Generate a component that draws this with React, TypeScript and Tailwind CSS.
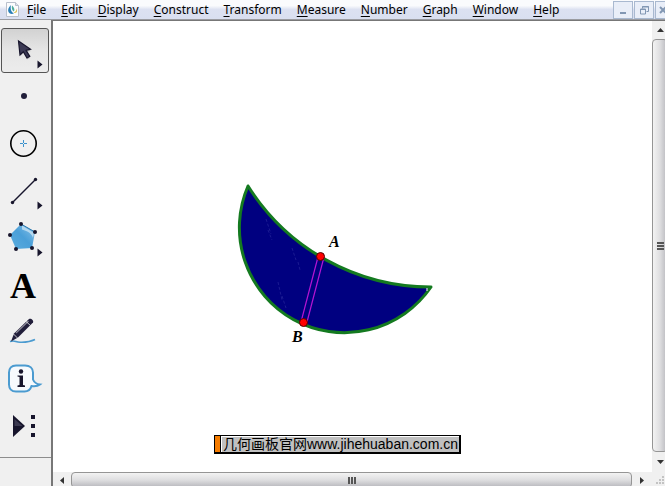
import React, { useState } from 'react';

interface ToolProps {
  label: string;
  active: boolean;
  onSelect: () => void;
  hasMenu?: boolean;
  children: React.ReactNode;
}

const MENUS = [
  'File',
  'Edit',
  'Display',
  'Construct',
  'Transform',
  'Measure',
  'Number',
  'Graph',
  'Window',
  'Help',
];

const AppIcon = () => (
  <svg width="13" height="15" viewBox="0 0 13 15" className="shrink-0">
    <path d="M.5.5h9l3 3v11H.5z" fill="#fbfcfe" stroke="#b9c0cc" />
    <path d="M9.5.5v3h3" fill="#dde2ea" stroke="#b9c0cc" />
    <path d="M5 3C2.500 5.500 1.500 7.500 2.500 10 3.500 12 6 12.500 8 11.500 5.500 10.500 4 7 5 3z" fill="#2b7fb8" />
    <path d="M6 3.500c-.5 2.500 0 4.500 1.500 6C9 8.500 8.500 5.500 6 3.500z" fill="#4fae9c" />
    <path d="M10.500 6.500c0 2-.8 3.500-3 4.300 1.300.5 3 0 3.500-1.300.3-1 .1-2-.5-3z" fill="#d9c35a" />
  </svg>
);

const ToolButton: React.FC<ToolProps> = ({ label, active, onSelect, hasMenu, children }) => (
  <button
    type="button"
    aria-label={label}
    aria-pressed={active}
    onClick={onSelect}
    className={`h-[45px] w-full rounded-[3px] border ${
      active
        ? 'border-[#555] bg-linear-to-b from-[#d2d2d2] via-[#e6e6e6] to-[#ececec]'
        : 'border-transparent'
    }`}
  >
    <svg width="46" height="43" viewBox="0 0 46 43" className="block">
      {children}
      {hasMenu && <path d="M35.500 31.500l5 4-5 4z" fill="#17152c" />}
    </svg>
  </button>
);

const TOOLS = [
  {
    label: 'Selection Arrow',
    hasMenu: true,
    icon: (
      <>
        <path d="M17 13l1.500 14 3-3 3.500 6.500 3-1.500-3.500-6 4.500-1z" fill="#999" opacity=".5" />
        <path
          d="M16.500 12l1.500 14 3.300-3.200 3.700 6.200 2.800-1.600-3.700-6.100 4.400-1.100z"
          fill="#3b3954"
          stroke="#17152c"
          strokeWidth="1.200"
        />
      </>
    ),
  },
  { label: 'Point', icon: <circle cx="22" cy="20" r="3" fill="#211e3a" /> },
  {
    label: 'Compass',
    icon: (
      <>
        <circle cx="21.500" cy="20.500" r="12.700" fill="none" stroke="#000" strokeWidth="1.600" />
        <path d="M18 20.500h3m1 0h3M21.500 17v3m0 1v3" stroke="#3b92cc" />
      </>
    ),
  },
  {
    label: 'Straightedge',
    hasMenu: true,
    icon: (
      <>
        <path d="M10.500 32.500l23-23" stroke="#17152c" strokeWidth="1.400" />
        <circle cx="10.500" cy="32.500" r="1.700" fill="#17152c" />
        <circle cx="33.500" cy="9.500" r="1.700" fill="#17152c" />
      </>
    ),
  },
  {
    label: 'Polygon',
    hasMenu: true,
    icon: (
      <>
        <path d="M19 7l14 8-3 16-16 1L8 18z" fill="url(#polygonFill)" />
        <path d="M20 8.500l12 7.500-1 5c-1-4-5-7-11-8.500z" fill="#d4e9f7" opacity=".7" />
        <path d="M19 7l14 8" stroke="#2876ad" />
        {[
          [19, 7],
          [33, 15],
          [30, 31],
          [14, 32],
          [8, 18],
        ].map(([x, y]) => (
          <circle key={x} cx={x} cy={y} r="2" fill="#17152c" />
        ))}
      </>
    ),
  },
  { label: 'Text', icon: null },
  {
    label: 'Marker',
    icon: (
      <>
        <path d="M8 30.500c5-1.500 5 .5 10 .7s10-.2 15-2.700" fill="none" stroke="#4b9bd0" strokeWidth="1.600" />
        <path d="M9 30.500l3-8L27 8c2-1 5 1.500 4 3.500L16 26.500z" fill="#211e3a" />
        <path d="M14 22L26.500 10" stroke="#8a8896" strokeWidth="1.200" />
        <path d="M11.500 23l4 4M24 10.500l4.500 4" stroke="#efefef" strokeWidth=".8" />
      </>
    ),
  },
  {
    label: 'Information',
    icon: (
      <>
        <path
          d="M14 7.500h9c5 0 8 3 8 7v7c1 2.500 3 4.500 7 5-2 1.500-5 2-8.500 1.500-1 3.500-3 5.500-7 5.500H14c-4.500 0-7-3-7-7v-12c0-4 2.500-7 7-7z"
          fill="#f7fafd"
          stroke="#4b9bd0"
          strokeWidth="2"
        />
        <circle cx="19" cy="13.500" r="2.200" fill="#17152c" />
        <path d="M15.500 17.500H21v9.500l2 .5v1.500h-7.500v-1.500l2-.5v-8l-2-.5z" fill="#17152c" />
      </>
    ),
  },
  {
    label: 'Custom Tools',
    icon: (
      <>
        <path d="M11 10l12 11-12 11z" fill="#17152c" />
        <path d="M12.500 14l8 7h-8z" fill="#55536a" opacity=".6" />
        <path d="M29 10h4v4h-4zM29 19h4v4h-4zM29 28h4v4h-4z" fill="#17152c" />
      </>
    ),
  },
];

const Sketch = () => (
  <>
    <svg
      width="220"
      height="180"
      viewBox="225 170 220 180"
      className="absolute top-[149px] left-[172px]"
    >
      <path
        d="M248 186A216 216 0 0 0 431 287A105 105 0 0 1 248 186z"
        fill="#000080"
        stroke="#147a20"
        strokeWidth="3"
        strokeLinejoin="round"
      />
      <path d="M426 289l2 0M427 291v-1" stroke="#fff" />
      <path
        d="M266 219l5 15M268 230l4 10M292 248l4 12M298 262l2 8M278 282l4 18M282 296l4 12"
        stroke="#26269a"
        strokeWidth=".7"
        strokeDasharray="3 2"
      />
      <path d="M318 257L301 322M324 257L307 322" stroke="#b414d2" strokeWidth="1.200" />
      <circle cx="320.500" cy="256.500" r="4" fill="#f00" stroke="#500" />
      <circle cx="303.500" cy="322.500" r="4" fill="#f00" stroke="#500" />
    </svg>
    <span className="absolute top-[211px] left-[276px] font-['Liberation_Serif',serif] text-base leading-5 font-bold italic">
      A
    </span>
    <span className="absolute top-[306px] left-[239px] font-['Liberation_Serif',serif] text-base leading-5 font-bold italic">
      B
    </span>
    <a
      href="#site"
      className="absolute top-[414px] left-[161px] flex h-[19px] border border-r-2 border-b-2 border-black bg-[#c0c0c0] whitespace-nowrap"
    >
      <span className="w-1.5 border-r border-black bg-[#f57c00]" />
      <span className="border-t border-l border-white pr-px pl-px font-['Liberation_Sans','Noto_Sans_CJK_SC',sans-serif] text-sm leading-[14px]">
        几何画板官网www.jihehuaban.com.cn
      </span>
    </a>
  </>
);

const VerticalScrollbar = () => (
  <div className="flex w-[13px] shrink-0 flex-col overflow-hidden bg-[#f0f0f0]">
    <button type="button" aria-label="Scroll up" className="flex h-[18px] w-4 shrink-0 items-center justify-center">
      <svg width="7" height="4" viewBox="0 0 7 4">
        <path d="M0 4l3.500-4L7 4z" fill="#333" />
      </svg>
    </button>
    <div className="flex w-4 flex-1 flex-col items-center justify-center gap-px rounded-sm border border-[#959595] bg-linear-to-r from-[#f3f3f3] via-[#dedee0] to-[#b8b8bd]">
      <span className="h-0.5 w-[7px] bg-[#555]" />
      <span className="h-0.5 w-[7px] bg-[#555]" />
      <span className="h-0.5 w-[7px] bg-[#555]" />
    </div>
    <button type="button" aria-label="Scroll down" className="flex h-5 w-4 shrink-0 items-center justify-center">
      <svg width="7" height="4" viewBox="0 0 7 4">
        <path d="M0 0l3.500 4L7 0z" fill="#333" />
      </svg>
    </button>
  </div>
);

const HorizontalScrollbar = () => (
  <div className="flex h-3.5 shrink-0 overflow-hidden bg-[#f0f0f0]">
    <button type="button" aria-label="Scroll left" className="flex h-4 w-[18px] shrink-0 items-center justify-center">
      <svg width="4" height="7" viewBox="0 0 4 7">
        <path d="M4 0L0 3.500 4 7z" fill="#333" />
      </svg>
    </button>
    <div className="flex h-4 flex-1 items-center justify-center gap-px rounded-sm border border-[#959595] bg-linear-to-b from-[#f3f3f3] via-[#dedee0] to-[#b8b8bd]">
      <span className="h-[7px] w-0.5 bg-[#555]" />
      <span className="h-[7px] w-0.5 bg-[#555]" />
      <span className="h-[7px] w-0.5 bg-[#555]" />
    </div>
    <button type="button" aria-label="Scroll right" className="flex h-4 w-5 shrink-0 items-center justify-center">
      <svg width="4" height="7" viewBox="0 0 4 7">
        <path d="M0 0l4 3.500L0 7z" fill="#333" />
      </svg>
    </button>
    <svg width="13" height="14" viewBox="0 0 13 14" className="shrink-0">
      <path d="M10 4h2v2h-2zM7 7h2v2H7zM10 7h2v2h-2zM4 10h2v2H4zM7 10h2v2H7zM10 10h2v2h-2z" fill="#c3c3c3" />
    </svg>
  </div>
);

export default function App() {
  const [tool, setTool] = useState('Selection Arrow');

  return (
    <div className="flex h-screen flex-col overflow-hidden bg-[#f0f0f0] font-['Noto_Sans',sans-serif] text-black">
      <header className="flex h-5 shrink-0 items-center overflow-hidden border-b border-[#9a9ba0] bg-linear-to-b from-[#fafbfd] from-30% via-[#dce1f1] via-50% to-[#d9dff0] pl-1.5">
        <AppIcon />
        <nav className="flex flex-1 gap-[15px] pl-2 text-xs leading-4">
          {MENUS.map((name) => (
            <button key={name} type="button">
              <span className="underline underline-offset-2">{name[0]}</span>
              {name.slice(1)}
            </button>
          ))}
        </nav>
        <div className="-mr-2.5 flex shrink-0 gap-px">
          <button
            type="button"
            aria-label="Minimize"
            className="flex h-[18px] w-5 items-center justify-center border border-[#a9b9d0] bg-[#e9eef8]"
          >
            <svg width="10" height="10" viewBox="0 0 10 10">
              <path d="M2 7h6v2H2z" fill="#8297b3" />
            </svg>
          </button>
          <button
            type="button"
            aria-label="Restore"
            className="flex h-[18px] w-5 items-center justify-center border border-[#a9b9d0] bg-[#e9eef8]"
          >
            <svg width="10" height="10" viewBox="0 0 10 10" fill="none" stroke="#8297b3">
              <path d="M3.500 3.500v-2h6v5h-2M3 2h7M1 4.500h6M1.500 4v5h5V4z" />
            </svg>
          </button>
          <button
            type="button"
            aria-label="Close"
            className="flex h-[18px] w-5 items-center border border-[#a9b9d0] bg-[#e9eef8] pl-0.5"
          >
            <svg width="10" height="10" viewBox="0 0 10 10">
              <path d="M2 2l6 6M8 2L2 8" stroke="#8297b3" strokeWidth="2" />
            </svg>
          </button>
        </div>
      </header>

      <div className="flex min-h-0 flex-1">
        <aside className="w-[51px] shrink-0">
          <div className="flex flex-col gap-0.5 border-b border-[#8d8d8d] py-2 pr-0.5 pl-px">
            <svg width="0" height="0" className="absolute">
              <defs>
                <linearGradient id="polygonFill" x1="1" y1="0" x2="0" y2="1">
                  <stop offset="0" stopColor="#8cc4ea" />
                  <stop offset=".5" stopColor="#4a9fd8" />
                  <stop offset="1" stopColor="#5badde" />
                </linearGradient>
              </defs>
            </svg>
            {TOOLS.map(({ label, hasMenu, icon }) =>
              icon ? (
                <ToolButton
                  key={label}
                  label={label}
                  hasMenu={hasMenu}
                  active={tool === label}
                  onSelect={() => setTool(label)}
                >
                  {icon}
                </ToolButton>
              ) : (
                <button
                  key={label}
                  type="button"
                  aria-label={label}
                  onClick={() => setTool(label)}
                  className="h-[45px] w-full pr-1 text-center font-['Liberation_Serif',serif] text-4xl font-bold"
                >
                  A
                </button>
              ),
            )}
          </div>
        </aside>

        <div className="flex min-w-0 flex-1 flex-col border-t border-l-2 border-[#777]">
          <div className="flex min-h-0 flex-1">
            <main className="relative flex-1 overflow-hidden bg-white">
              <Sketch />
            </main>
            <VerticalScrollbar />
          </div>
          <HorizontalScrollbar />
        </div>
      </div>
    </div>
  );
}
